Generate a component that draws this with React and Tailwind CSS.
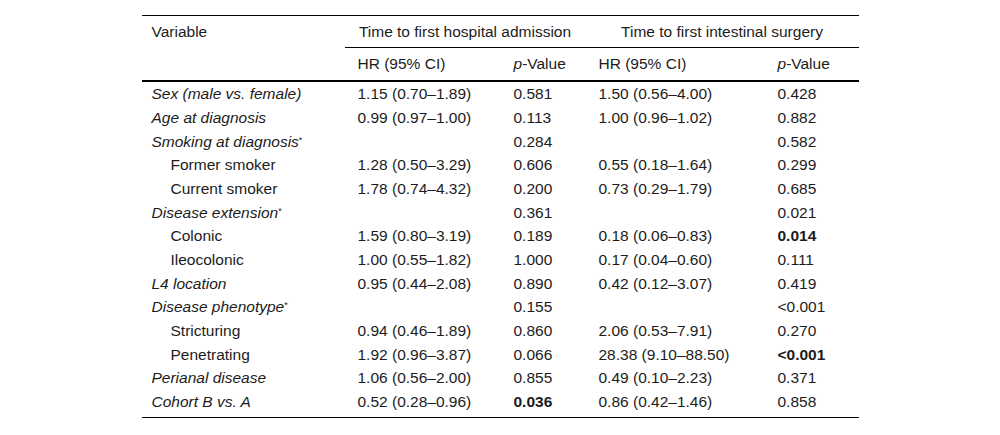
const rows = [
  { label: "Sex (male vs. female)", main: true, hr1: "1.15 (0.70–1.89)", p1: "0.581", hr2: "1.50 (0.56–4.00)", p2: "0.428" },
  { label: "Age at diagnosis", main: true, hr1: "0.99 (0.97–1.00)", p1: "0.113", hr2: "1.00 (0.96–1.02)", p2: "0.882" },
  { label: "Smoking at diagnosis", main: true, star: true, hr1: "", p1: "0.284", hr2: "", p2: "0.582" },
  { label: "Former smoker", hr1: "1.28 (0.50–3.29)", p1: "0.606", hr2: "0.55 (0.18–1.64)", p2: "0.299" },
  { label: "Current smoker", hr1: "1.78 (0.74–4.32)", p1: "0.200", hr2: "0.73 (0.29–1.79)", p2: "0.685" },
  { label: "Disease extension", main: true, star: true, hr1: "", p1: "0.361", hr2: "", p2: "0.021" },
  { label: "Colonic", hr1: "1.59 (0.80–3.19)", p1: "0.189", hr2: "0.18 (0.06–0.83)", p2: "0.014", b2: true },
  { label: "Ileocolonic", hr1: "1.00 (0.55–1.82)", p1: "1.000", hr2: "0.17 (0.04–0.60)", p2: "0.111" },
  { label: "L4 location", main: true, hr1: "0.95 (0.44–2.08)", p1: "0.890", hr2: "0.42 (0.12–3.07)", p2: "0.419" },
  { label: "Disease phenotype", main: true, star: true, hr1: "", p1: "0.155", hr2: "", p2: "<0.001" },
  { label: "Stricturing", hr1: "0.94 (0.46–1.89)", p1: "0.860", hr2: "2.06 (0.53–7.91)", p2: "0.270" },
  { label: "Penetrating", hr1: "1.92 (0.96–3.87)", p1: "0.066", hr2: "28.38 (9.10–88.50)", p2: "<0.001", b2: true },
  { label: "Perianal disease", main: true, hr1: "1.06 (0.56–2.00)", p1: "0.855", hr2: "0.49 (0.10–2.23)", p2: "0.371" },
  { label: "Cohort B vs. A", main: true, hr1: "0.52 (0.28–0.96)", p1: "0.036", b1: true, hr2: "0.86 (0.42–1.46)", p2: "0.858" },
];

const cols = "grid grid-cols-[203px_156px_85px_179px_94px]";

export default function App() {
  return (
    <div className="w-[1000px] h-[435px] bg-white pt-[15px] text-[15.5px] text-[#1c1c1c]" style={{ fontFamily: '"Liberation Sans", Arial, sans-serif' }}>
      <div className="w-[717px] mx-auto border-t border-black">
        {/* group headers */}
        <div className={cols}>
          <div className="row-span-2 pl-[10px] h-[32px] flex items-center">Variable</div>
          <div className="col-span-2 h-[32px] flex items-center justify-center border-b border-black">
            Time to first hospital admission
          </div>
          <div className="col-span-2 h-[32px] flex items-center justify-center border-b border-black">
            Time to first intestinal surgery
          </div>
          <div className="h-[32px] flex items-center pl-[13px]">HR (95% CI)</div>
          <div className="h-[32px] flex items-center pl-[13px]"><i>p</i>-Value</div>
          <div className="h-[32px] flex items-center pl-[13px]">HR (95% CI)</div>
          <div className="h-[32px] flex items-center pl-[13px]"><i>p</i>-Value</div>
        </div>

        <div className="border-t-2 border-black pb-[3px] border-b">
          {rows.map((r) => (
            <div key={r.label} className={`${cols} h-[23.7px] items-center`}>
              <div className={r.main ? "pl-[10px] italic" : "pl-[29px]"}>
                {r.label}
                {r.star && <span className="text-[9px] not-italic relative top-[-4px]">*</span>}
              </div>
              <div className="pl-[13px]">{r.hr1}</div>
              <div className={r.b1 ? "pl-[13px] font-bold" : "pl-[13px]"}>{r.p1}</div>
              <div className="pl-[13px]">{r.hr2}</div>
              <div className={r.b2 ? "pl-[13px] font-bold" : "pl-[13px]"}>{r.p2}</div>
            </div>
          ))}
        </div>
      </div>
    </div>
  );
}
